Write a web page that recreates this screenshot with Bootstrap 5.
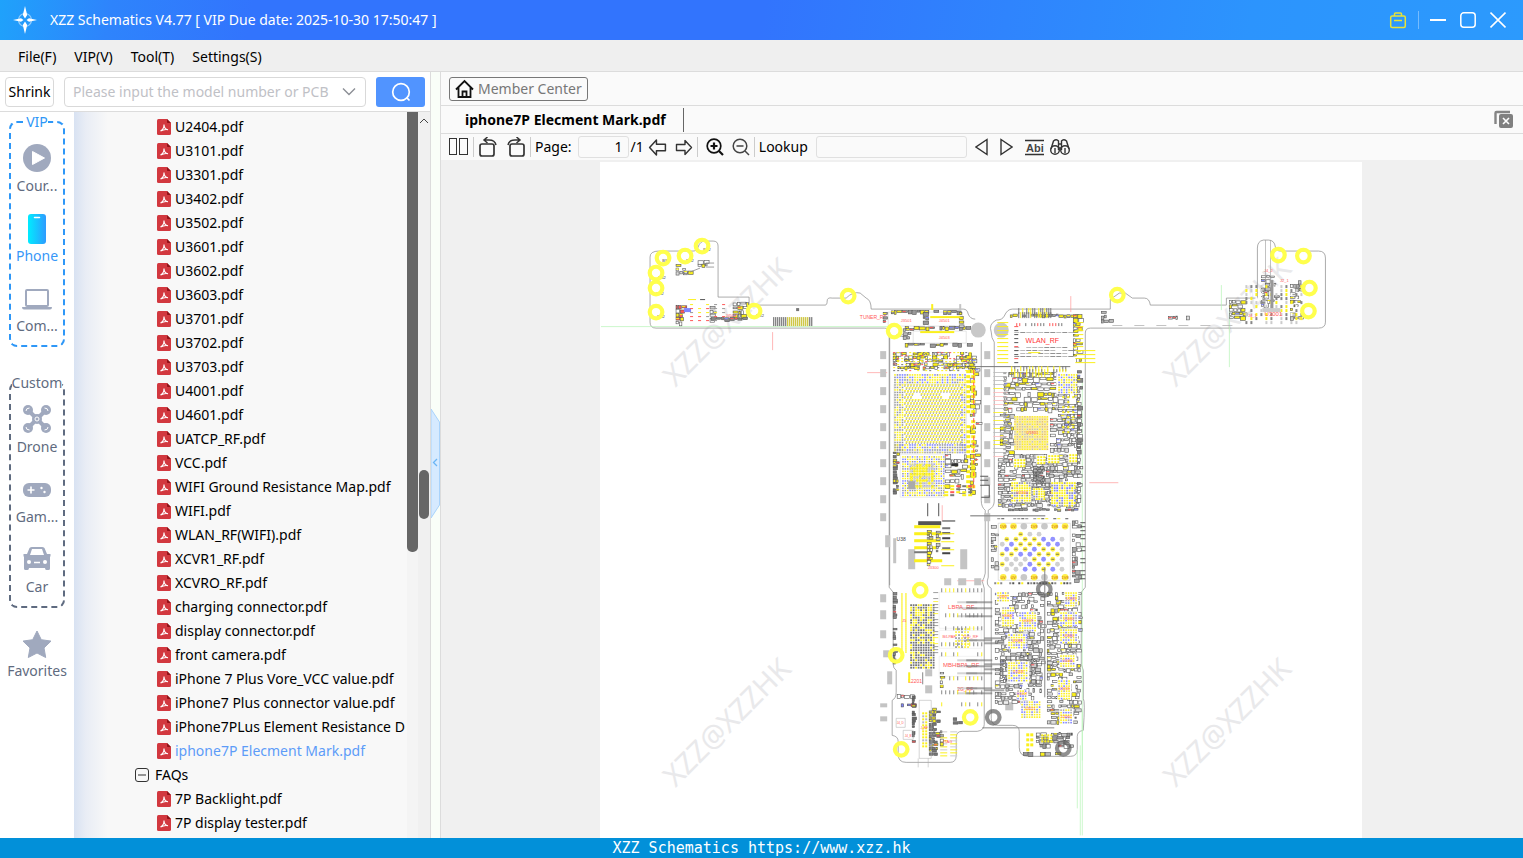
<!DOCTYPE html>
<html lang="en">
<head>
<meta charset="utf-8">
<meta name="viewport" content="width=device-width, initial-scale=1">
<title>XZZ Schematics</title>
<link href="https://cdn.jsdelivr.net/npm/bootstrap@5.3.0/dist/css/bootstrap.min.css" rel="stylesheet">
<style>
:root{--ui:"Noto Sans","Open Sans",sans-serif;--line:#dcdcdc;--slate:#5f6b80}
body{font-family:var(--ui);font-size:14px;line-height:24px;color:#000;background:#fafafa}
svg{flex:none;display:block}
.app-title{height:40px;color:#fff;background:linear-gradient(100deg,#1fa2fb 0,#2e84fc 110px,#3274fd 250px,#3274fd 50%,#2c94fd 82%,#2c9afd 100%);padding:0 17px 0 8px}
.app-title button,.tool{border:0;background:none;padding:0;color:inherit}
.win-tools{gap:14px}
.win-tools .vr{opacity:.35;margin:0 -3px}
.app-menu{height:32px;background:#efefef;border-bottom:1px solid var(--line);padding:2px 18px 0;gap:18px}
.app-menu a,.tree a,.rail-item{color:inherit;text-decoration:none}
.side{width:431px;border-right:1px solid var(--line)}
.search-row{height:40px;background:#fff;border-bottom:1px solid var(--line);padding:0 5px;gap:10px}
.box{border:1px solid #d9d9d9;border-radius:4px;background:#fff;height:30px}
.box input{border:0;outline:0;min-width:0;background:none;padding:0}
.box input::placeholder{color:#bfc1c6;opacity:1}
.go{width:49px;height:30px;border:0;border-radius:3px;background:#5194ff;color:#fff}
.rail{width:74px;background:#fff;color:var(--slate);padding:0 9px}
.rail fieldset{border:2px dashed #2e97f7;border-radius:8px;margin:0 0 26px;padding:5px 0 0}
.rail legend{float:none;width:auto;margin:0 auto -12px;padding:0;background:#fff;font-size:14px;line-height:20px;color:#2e97f7}
.rail .custom{border-color:var(--slate);margin-bottom:16px}
.rail .custom legend{color:var(--slate)}
.rail-item{display:flex;flex-direction:column;align-items:center;height:70px;white-space:nowrap;width:100%;line-height:20px;padding-top:3px}
.rail legend+.rail-item{margin-top:12px}
.rail fieldset .rail-item:last-child{height:68px}
.rail-item svg{color:#a0a9be}
.tree{background:linear-gradient(90deg,#d8e2f2 0,#e9edf5 12px,#f8f8f8 34px);padding-top:3px;min-width:0}
.tree a{display:flex;align-items:center;gap:4px;height:24px;padding-left:83px;white-space:nowrap}
.tree a.folder{padding-left:61px;gap:6px}
.tree a.current{color:#5d9cf8}
.tree-bar{width:11px;background:#f4f4f4}
.tree-bar i{display:block;height:440px;background:#666;border-radius:0 0 5px 5px}
.page-bar{width:12px;background:#f0f0f0}
.page-bar i{display:block;height:49px;width:10px;margin:344px auto 0;background:#666;border-radius:5px}
.splitter{width:10px;background:#f9fef8;border-right:1px solid var(--line);padding-top:18px}
.view{background:#f0f0f0;min-width:0}
.center-row{height:34px;background:#fafafa;border-bottom:1px solid var(--line);padding:0 8px}
.member{height:24px;border:1px solid #777;border-radius:3px;background:#fafafa;color:#777;padding:0 5px;line-height:20px;gap:4px}
.tab-row{height:28px;background:#fafafa;border-bottom:1px solid var(--line)}
.doc-tab{border:0;background:none;font-weight:700;padding:0 17px 0 24px;border-right:1px solid #666}
.tool-row{height:28px;background:#fafafa;border-bottom:2px solid #f0f0f0;padding-left:7px}
.tool-row input{height:22px;border:1px solid #e0e0e0;border-radius:3px;background:#fafafa;padding:0 5px;text-align:right}
.tool-row hr{width:1px;height:20px;margin:0 4px;border:0;background:#ccc;opacity:1}
.s4{margin-left:4px!important}.s6{margin-left:6px!important}.s8{margin-left:8px!important}.s12{margin-left:12px!important}
.sheet{width:70.6%;background:#fff}
.app-foot{height:20px;background:#0290d9;color:#fff;font:15px/20px "DejaVu Sans Mono",monospace}
</style>
</head>
<body class="vh-100 d-flex flex-column overflow-hidden">
<svg width="0" height="0" class="position-absolute" aria-hidden="true">
 <symbol id="pdf" viewBox="0 0 14 16"><path d="M1.500 0H10l4 4v10.500q0 1.500-1.500 1.500h-11Q0 16 0 14.500v-13Q0 0 1.500 0z" fill="#d2383f"/><path d="M10 0v3.200q0 .8.800.800H14z" fill="#901218"/><path d="M3.500 12c2-1 3.500-3.500 3.500-6.500 0 3 1.500 4.800 4 5.200-2.500-.700-5 0-7.500 1.300" fill="none" stroke="#fff" stroke-width="1.100"/></symbol>
 <symbol id="arrow" viewBox="0 0 18 16"><path d="M1.500 8 8 1v4h8.500v6H8v4z" fill="none" stroke="#333" stroke-width="1.400" stroke-linejoin="round"/></symbol>
 <symbol id="rot" viewBox="0 0 20 20"><rect x="2" y="7" width="14" height="12" rx="2" fill="none" stroke="#333" stroke-width="1.700"/><path d="M6 3h5q6 0 7 5M9.500 0 6 3l3.500 3" fill="none" stroke="#333" stroke-width="1.500"/></symbol>
</svg>

<header class="app-title d-flex align-items-center flex-shrink-0">
 <svg width="34" height="34" viewBox="0 0 34 34" fill="#fff"><circle cx="17" cy="17" r="6.500" fill="none" stroke="#fff" stroke-width="1.200" opacity=".5"/><path d="M17 3l2.200 9-2.200 3.500-2.200-3.500zM17 31l2.200-9-2.200-3.500-2.200 3.500zM5 17l8-1.800 2.500 1.800-2.500 1.800zM29 17l-8-1.800-2.500 1.800 2.500 1.800z"/></svg>
 <span class="ms-2">XZZ Schematics V4.77 [ VIP Due date: 2025-10-30 17:50:47 ]</span>
 <div class="win-tools ms-auto d-flex align-items-center">
  <button aria-label="Toolbox"><svg width="18" height="18" viewBox="0 0 18 18" fill="none" stroke="#e8e337" stroke-width="1.500"><rect x="1.700" y="5" width="14.600" height="11.500" rx="1.500"/><path d="M5.500 5V3q0-1 1-1h5q1 0 1 1v2M5 9.500h8"/></svg></button>
  <div class="vr"></div>
  <button aria-label="Minimize"><svg width="16" height="18" viewBox="0 0 16 18"><path d="M0 9h16" stroke="#fff" stroke-width="2"/></svg></button>
  <button aria-label="Maximize"><svg width="16" height="18" viewBox="0 0 16 18"><rect x=".8" y="1.800" width="14.400" height="14.400" rx="3" fill="none" stroke="#fff" stroke-width="1.500"/></svg></button>
  <button aria-label="Close"><svg width="16" height="18" viewBox="0 0 16 18"><path d="M.5 1.500l15 15m0-15l-15 15" stroke="#fff" stroke-width="1.600"/></svg></button>
 </div>
</header>

<nav class="app-menu d-flex align-items-center flex-shrink-0">
 <a href="#">File(F)</a><a href="#">VIP(V)</a><a href="#">Tool(T)</a><a href="#">Settings(S)</a>
</nav>

<div class="d-flex flex-grow-1" style="min-height:0">
 <aside class="side d-flex flex-column flex-shrink-0">
  <form class="search-row d-flex align-items-center flex-shrink-0">
   <button type="button" class="box px-0 flex-shrink-0" style="width:49px">Shrink</button>
   <div class="box d-flex align-items-center flex-grow-1 px-2" style="min-width:0">
    <input class="flex-grow-1" aria-label="Model number or PCB" placeholder="Please input the model number or PCB">
    <svg width="16" height="10" viewBox="0 0 16 10"><path d="M2 1.500l6 6 6-6" fill="none" stroke="#8c8f96" stroke-width="1.400"/></svg>
   </div>
   <button type="button" class="go flex-shrink-0 d-flex align-items-center justify-content-center" aria-label="Search"><svg width="20" height="20" viewBox="0 0 20 20" fill="none" stroke="#fff" stroke-width="1.700"><circle cx="10" cy="10" r="8.300"/><path d="M15.500 15.500l3 3"/></svg></button>
  </form>
  <div class="d-flex flex-grow-1" style="min-height:0">
   <nav class="rail flex-shrink-0">
    <fieldset><legend>VIP</legend>
     <a href="#" class="rail-item"><svg width="28" height="36" viewBox="0 0 28 36"><circle cx="14" cy="18" r="14" fill="currentColor"/><path d="M9.500 11.500v13L21.500 18z" fill="#fff" stroke="#fff" stroke-linejoin="round"/></svg>Cour...</a>
     <a href="#" class="rail-item" style="color:#3797f8"><svg width="28" height="36" viewBox="0 0 28 36"><defs><linearGradient id="pg"><stop stop-color="#00ecff"/><stop offset="1" stop-color="#2e9bff"/></linearGradient></defs><rect x="5" y="4" width="18" height="30" rx="3" fill="url(#pg)"/><path d="M11.500 7.500h5" stroke="#fff" stroke-width="1.500" stroke-linecap="round"/></svg>Phone</a>
     <a href="#" class="rail-item"><svg width="30" height="36" viewBox="0 0 30 36"><rect x="4" y="10" width="22" height="16" rx="1" fill="none" stroke="currentColor" stroke-width="2"/><path d="M0 27h30q0 2.500-2 2.500H2Q0 29.500 0 27z" fill="currentColor"/></svg>Com...</a>
    </fieldset>
    <fieldset class="custom"><legend>Custom</legend>
     <a href="#" class="rail-item"><svg width="28" height="36" viewBox="0 0 28 36"><g fill="none" stroke="currentColor" stroke-width="4"><path d="M6 10l16 16m0-16L6 26"/></g><g fill="currentColor"><circle cx="5" cy="9" r="5"/><circle cx="23" cy="9" r="5"/><circle cx="5" cy="27" r="5"/><circle cx="23" cy="27" r="5"/><circle cx="14" cy="18" r="5"/></g><g fill="none" stroke="#fff" stroke-width="1"><path d="M3 10q0-3 3.500-3M25 10q0-3-3.500-3M3 26q0 3 3.500 3M25 26q0 3-3.500 3"/><circle cx="14" cy="18" r="2"/></g></svg>Drone</a>
     <a href="#" class="rail-item"><svg width="28" height="36" viewBox="0 0 28 36"><rect y="12" width="28" height="14" rx="6" fill="currentColor"/><path d="M4.500 19h7M8 15.500v7" stroke="#fff" stroke-width="1.600"/><circle cx="18.500" cy="17" r="1.200" fill="#fff"/><circle cx="21.500" cy="21" r="1.200" fill="#fff"/></svg>Gam...</a>
     <a href="#" class="rail-item"><svg width="28" height="36" viewBox="0 0 28 36"><path d="M6.500 7Q7.500 6 9 6h10q1.500 0 2.500 1l2.500 6h3.500v2.500H27v12q0 1.500-1.500 1.500h-2q-1.500 0-1.500-2H6q0 2-1.500 2h-2Q1 29 1 27.500v-12H.5V13H4zM9 8l-2 6h14l-2-6z" fill="currentColor" fill-rule="evenodd"/><circle cx="6" cy="21" r="2" fill="#fff"/><circle cx="22" cy="21" r="2" fill="#fff"/><path d="M11 21.500h6" stroke="#fff" stroke-width="1.500"/></svg>Car</a>
    </fieldset>
    <a href="#" class="rail-item"><svg width="30" height="34" viewBox="0 0 30 34"><path d="M15 4l4.300 8.700 9.700 1.400-7 6.800 1.700 9.600L15 26l-8.700 4.500L8 20.900l-7-6.800 9.700-1.400z" fill="currentColor" stroke="currentColor" stroke-linejoin="round"/></svg>Favorites</a>
   </nav>
   <div class="tree flex-grow-1 overflow-hidden" id="tree"></div>
   <div class="tree-bar flex-shrink-0"><i></i></div>
   <div class="page-bar flex-shrink-0"><svg class="mx-auto mt-1" width="10" height="10" viewBox="0 0 10 10"><path d="M1 7l4-4 4 4" fill="none" stroke="#444"/></svg><i></i></div>
  </div>
 </aside>
 <div class="splitter flex-shrink-0 d-flex align-items-center"><button class="tool" aria-label="Collapse"><svg width="9" height="110" viewBox="0 0 9 110"><path d="M0 0l8.500 13v83L0 109z" fill="#d6eaff" stroke="#a9d3fb"/><path d="M6 50l-3.500 3.500L6 57" fill="none" stroke="#6bb5f5" stroke-width="1.300"/></svg></button></div>

 <main class="view flex-grow-1 d-flex flex-column">
  <div class="center-row d-flex align-items-center flex-shrink-0"><button class="member d-flex align-items-center"><svg width="19" height="20" viewBox="0 0 19 20" fill="none" stroke="#111" stroke-width="1.800"><path d="M1 10.500L9.500 2 18 10.500M3.500 8.500V18h12V8.500M7.500 18v-5.500h4V18"/></svg>Member Center</button></div>
  <div class="tab-row d-flex align-items-center flex-shrink-0"><button class="doc-tab">iphone7P Elecment Mark.pdf</button>
   <button class="tool ms-auto me-2" aria-label="Close all"><svg width="22" height="20" viewBox="0 0 22 20"><path d="M2.500 14V3q0-1 1-1H17" fill="none" stroke="#858585" stroke-width="2.400"/><rect x="6" y="4" width="14" height="14" rx="2" fill="#808080"/><path d="M10 8l6 6m0-6l-6 6" stroke="#fff" stroke-width="1.600"/></svg></button></div>
  <div class="tool-row d-flex align-items-center flex-shrink-0">
   <button class="tool" aria-label="Two pages"><svg width="21" height="18" viewBox="0 0 21 18" fill="none" stroke="#333"><rect x="1.500" y=".5" width="7" height="16"/><rect x="11.500" y=".5" width="8" height="16"/></svg></button><hr>
   <button class="tool" aria-label="Rotate left"><svg width="20" height="20"><use href="#rot"/></svg></button>
   <button class="tool s8" aria-label="Rotate right"><svg width="20" height="20" viewBox="0 0 20 20"><use href="#rot" transform="matrix(-1 0 0 1 20 0)"/></svg></button><hr>
   <label for="pg-no">Page:</label><input id="pg-no" value="1" class="s6" style="width:51px"><span style="padding-left:2px">/1</span>
   <button class="tool s4" aria-label="Previous page"><svg width="19" height="17"><use href="#arrow"/></svg></button>
   <button class="tool s8" aria-label="Next page"><svg width="18" height="17" viewBox="0 0 18 16"><use href="#arrow" transform="matrix(-1 0 0 1 18 0)"/></svg></button><hr>
   <button class="tool s4" aria-label="Zoom in"><svg width="18" height="18" viewBox="0 0 18 18" fill="none" stroke="#111" stroke-width="1.700"><circle cx="8" cy="8" r="6.800"/><path d="M13 13l4 4M4.500 8h7M8 4.500v7" stroke-width="2.200"/></svg></button>
   <button class="tool s8" aria-label="Zoom out"><svg width="18" height="18" viewBox="0 0 18 18" fill="none" stroke="#444" stroke-width="1.500"><circle cx="8" cy="8" r="6.800"/><path d="M13 13l4 4M4.500 8h7"/></svg></button><hr>
   <label for="look">Lookup</label><input id="look" class="s8" style="width:151px">
   <button class="tool s8" aria-label="Find previous"><svg width="13" height="18" viewBox="0 0 13 18" fill="none" stroke="#333" stroke-width="1.400"><path d="M12 1.500v15L1 9z"/></svg></button>
   <button class="tool s12" aria-label="Find next"><svg width="13" height="18" viewBox="0 0 13 18" fill="none" stroke="#333" stroke-width="1.400"><path d="M1 1.500v15L12 9z"/></svg></button>
   <button class="tool s12" aria-label="Match case"><svg width="19" height="18" viewBox="0 0 19 18"><path d="M0 2.500h19M0 16.500h19" stroke="#333" stroke-width="1.300"/><text x="1" y="14" font-size="11" font-weight="700" fill="#444" font-family="Liberation Sans">Abi</text></svg></button>
   <button class="tool s6" aria-label="Search document"><svg width="20" height="17" viewBox="0 0 20 17" fill="none" stroke="#333" stroke-width="1.400"><circle cx="5" cy="11" r="4.300"/><circle cx="15" cy="11" r="4.300"/><path d="M1 10L3.500 2q3-2.500 5 0v9M19 10l-2.500-8q-3-2.500-5 0v9M8.500 5h3M8.500 9h3M5 9v5M15 9v5"/></svg></button>
  </div>
  <div class="flex-grow-1 overflow-hidden d-flex justify-content-center" style="min-height:0;padding-right:2px"><div class="sheet"><svg id="board" class="w-100" viewBox="600 162 762 676"></svg></div></div>
 </main>
</div>
<footer class="app-foot text-center flex-shrink-0">XZZ Schematics https://www.xzz.hk</footer>

<script src="https://cdn.jsdelivr.net/npm/bootstrap@5.3.0/dist/js/bootstrap.bundle.min.js"></script>
<script>
// File tree
const files = ['U2404','U3101','U3301','U3402','U3502','U3601','U3602','U3603','U3701','U3702','U3703','U4001','U4601','UATCP_RF','VCC','WIFI Ground Resistance Map','WIFI','WLAN_RF(WIFI)','XCVR1_RF','XCVRO_RF','charging connector','display connector','front camera','iPhone 7 Plus Vore_VCC value','iPhone7 Plus connector value','iPhone7PLus Element Resistance D','iphone7P Elecment Mark','/FAQs','7P Backlight','7P display tester'];
document.getElementById('tree').innerHTML = files.map(n => n[0] === '/'
  ? `<a href="#" class="folder"><svg width="14" height="14" viewBox="0 0 14 14" fill="none" stroke="#333"><rect x=".5" y=".5" width="13" height="13" rx="2.500"/><path d="M3 7h8"/></svg>${n.slice(1)}</a>`
  : `<a href="#"${n.startsWith('iphone7P') ? ' class="current"' : ''}><svg width="14" height="16"><use href="#pdf"/></svg>${n}${n.endsWith(' D') ? '' : '.pdf'}</a>`).join('');

// Board drawing
let seed = 7; const rnd = () => (seed = seed * 16807 % 2147483647) / 2147483647;
const K = '#555', Y = '#fbf01c', G = '#c4c4c4', R = '#ff5858', B = '#8085ff';
const out = [], add = s => out.push(s), pick = a => a[Math.floor(rnd() * a.length)];
const bar = (x, y, w, h, c) => add(`<rect x="${x}" y="${y}" width="${w}" height="${h}" fill="${c}"/>`);
const path = (d, c = '#888', w = .7) => add(`<path d="${d}" fill="none" stroke="${c}" stroke-width="${w}"/>`);
const ring = (x, y, c = '#ffff4d', r = 6.300) => add(`<circle cx="${x}" cy="${y}" r="${r}" fill="none" stroke="${c}" stroke-width="4.200"/>`);
const dot = (x, y, r, c) => add(`<circle cx="${x}" cy="${y}" r="${r}" fill="${c}"/>`);
const word = (x, y, s, t, c = R) => add(`<text x="${x}" y="${y}" font-size="${s}" fill="${c}" text-anchor="middle" font-family="Liberation Sans">${t}</text>`);
const grid = (x, y, w, h, sx, sy, d, cs) => { for (let j = 0; j < h; j += sy) for (let i = 0; i < w; i += sx) bar(x + i, y + j, d, d, pick(cs)); };
// rows of component outlines with small coloured pads
const parts = (x, y, w, h, fill = [Y, '#fff', '#fff', '#ccc'], s = 4, gap = .12) => {
  for (let j = 0; j < h - 2; j += s) for (let i = 0; i < w - 2;) {
    const a = 1.500 + rnd() * s, b = 1.500 + rnd() * (s - 1.500);
    if (rnd() > gap) { add(`<rect x="${(x + i).toFixed(1)}" y="${(y + j + rnd()).toFixed(1)}" width="${a.toFixed(1)}" height="${b.toFixed(1)}" fill="${pick(fill)}" stroke="#555" stroke-width=".6"/>`); if (rnd() < .15) bar((x + i).toFixed(1), y + j + 1, 3, 1, pick([R, Y, Y, B])); }
    i += a + .8;
  } };
const dashes = (x, y, w, h, sx, sy, cs, len = 3, t = 1) => { for (let j = 0; j < h; j += sy) for (let i = 0; i < w; i += sx) if (rnd() < .85) bar(x + i, y + j, len, t, pick(cs)); };

for (const [x, y] of [[734, 329], [1234, 329], [734, 729], [1234, 729]])
  add(`<text transform="translate(${x} ${y}) rotate(-45)" text-anchor="middle" font-size="29" fill="#e9e9eb" font-family="Noto Sans" font-weight="400">XZZ@XZZHK</text>`);

// outlines of both halves
path('M659 251H693q4 0 5-4 2-6 7-6h8q5 0 5 5v51h31v8h76q2 0 2-4t5-3h14q7-7 14-5l6 5q5 2 5 11h92q4 0 5 5 2 5 7 5M981 342V500q0 7 4 10V573q-1 5-3 8l2 7V724q0 6-7 7h-15q-6 0-6 6v18q0 7-6 7h-44q-8 0-8-8v-13q0-5-6-6V700q4-2 4-8v-22q-3-2-3-6v-72l-4-5V332q0-4-5-4H656q-6 0-6-6v-65q0-6 9-6');
path('M1263 240h5q6 0 7 7 1 4 5 4h38q7 0 7 7v64q0 6-7 6h-228q-5 0-5 5v254l-4 5v72l2 6v28q2 3 0 32-6 1-6 6v13q0 7-7 7h-42q-9 0-9-9v-16q0-6-7-6h-14q-7 0-7-7V588q-6-3-3-11V510q6-3 6-9V342q-3-4-3-10-3-8 5-12 6 0 8-4 3-7 8-7h98v-10q5-3 9-6h6l7 5h12q5 0 6 7h76v-7h31v-50q0-7 6-8z');
path('M889.500 332v253', '#888', .7);
path('M601 326.500H889M1221 285v25M1229 310v57M1082 380V760M1077 750v58M1080 745v90M1082 710v125', '#b6f3b6', .7);
path('M772.500 332v18M867 372.500h20M1070.500 296v16M1089 482.500h29M942 505v16M957 580.500h27', '#ff9a9a', .7);

// upper left wing
parts(676, 305, 8, 20, [Y, '#fff', R]); parts(733, 302, 16, 17); parts(710, 306, 6, 17); parts(711, 317, 38, 6, ['#888']);
for (let i = 0; i < 40; i += 2) bar(773 + i, 317, 1.200, 9, i > 12 && i < 36 ? '#c9c02f' : '#777');
parts(676, 264, 10, 12, [Y, '#ddd', '#fff'], 3.500); parts(684, 270, 14, 6, ['#ddd', Y]); parts(698, 260, 10, 9, [Y, '#fff']); path('M690 272l10-4M706 263h8M706 267h8', '#888', .8);
bar(684, 308, 7, 4, B); dashes(690, 304, 40, 18, 8, 4, [Y, Y, '#999', R]); word(731, 317, 4, 'J4504'); bar(796, 308, 3, 3, '#777'); bar(688, 299, 8, 1, Y); bar(700, 299, 5, 1, K);
for (const [x, y] of [[666, 262], [690, 262], [707, 251], [662, 279], [660, 295], [661, 318], [760, 317], [900, 337]]) word(x, y, 4, 'BS2', '#444');
word(873, 319, 5, 'TUNER_RF');
// upper right wing
parts(1101, 311, 10, 12, ['#bbb']); parts(1168, 316, 10, 6, ['#ddd']); parts(1186, 316, 10, 6, ['#ddd']);
parts(1229, 300, 16, 20, [Y, '#fff']); parts(1261, 275, 15, 32, ['#bbb', '#fff'], 4, .3); parts(1290, 280, 12, 40, [Y, '#fff', '#ccc'], 4, .3);
dashes(1245, 285, 60, 38, 5, 4, [Y, '#888', '#ccc', '#fff'], 2, 3); bar(1270, 280, 3, 30, '#999'); bar(1262, 308, 18, 4, '#ccc'); word(1273, 316, 6, 'U3001'); word(1252, 317, 4, 'J4_1'); word(1284, 282, 4, 'J2_1'); word(1268, 272, 4, 'J4_2');
for (const x of [1265, 1270]) bar(x, 240, .6, 40, '#999'); dashes(1112, 325, 120, 1, 22, 9, ['#aaa'], 10, .7);

// left half, top connectors
path('M888 312h36v14h-36zM928 312h34v14h-34zM913 331h53v12h-53z', '#ccc', .5);
parts(887, 310, 76, 4, ['#999', '#999', Y]); parts(905, 326, 65, 5, [Y, '#999']); parts(905, 343, 66, 4, ['#999', Y]); parts(959, 312, 6, 16); parts(923, 312, 5, 14, ['#999']); parts(883, 312, 5, 14, ['#999']);
word(906, 322, 4, 'J3501'); word(944, 322, 4, 'J4501'); word(944, 339, 4, 'J4503'); bar(920, 331, 34, 2, Y); bar(930, 316, 30, 2, Y);
bar(931, 304, 2, 6, Y); bar(959, 304, 2, 6, G); parts(903, 328, 10, 12, ['#bbb']);
parts(893, 352, 84, 18, [Y, Y, '#fff'], 3.500, .3); dashes(893, 352, 84, 20, 4, 3, [Y, '#777', Y, R], 2, 1);
// processor
grid(894, 374, 72, 9, 2.500, 2.500, 1.600, [Y, '#999', B, Y]);
for (let j = 0; j < 60; j += 3) for (let i = (j % 2) * 1.500; i < 56; i += 3) { if ((j > 6 && j < 14 && (i > 8 && i < 16 || i > 36 && i < 44))) continue; bar(904 + i, 384 + j, 1.900, 1.500, Y); bar(904 + i, 385.500 + j, 1.300, 1, '#8c8ca4'); }
grid(894, 384, 8, 67, 2.500, 2.500, 1.600, [Y, '#999']); grid(961, 384, 5, 67, 2.500, 2.500, 1.600, [Y, '#999', B]); grid(894, 444, 72, 8, 2.500, 2.500, 1.600, [Y, '#999', B, '#999']);
parts(970, 368, 8, 125, [Y, '#fff', Y], 4.500, .3); dashes(966, 370, 8, 120, 5, 5, [Y, Y], 4, 3); dashes(973, 370, 5, 120, 5, 6, [R], 1, 4); path('M894 384H966V452H894z', '#ccc', .5);
// memory
grid(902, 456, 42, 40, 2.400, 2.400, 1.500, [Y, Y, '#999', B]); grid(910, 464, 24, 24, 3, 3, 2.400, [Y, Y, '#ccc']); path('M900 454H944V497H900zM909 463h26v26h-26z', '#ddd', .6); parts(893, 452, 6, 44, ['#777', '#777', Y], 3); parts(945, 454, 22, 40, ['#fff', '#fff', Y], 5, .35);
bar(908, 481, 7, 8, '#aaa'); dashes(944, 485, 30, 10, 6, 3, [Y, Y, R, '#777'], 4, 2); bar(951, 463, 7, 3, '#333');
for (const x of [880, 984]) for (let i = 0; i < 10; i++) bar(x, 351 + i * 18, 6, 8, G);
for (const [x, y, w, h] of [[880, 594, 6, 8], [880, 610, 6, 9], [880, 630, 6, 8], [883, 650, 6, 7], [887, 671, 5, 13], [880, 703, 7, 4], [880, 716, 7, 5], [908, 549, 7, 20], [960, 549, 7, 20], [885, 535, 5, 12], [893, 538, 3, 25], [944, 578, 7, 7], [958, 578, 8, 7], [974, 578, 7, 7], [925, 669, 7, 7], [925, 685, 7, 8], [1005, 702, 8, 8]]) bar(x, y, w, h, G);
path('M980 476h8M980 480h8M980 485h9v12h-8', '#555', 1);
dot(978, 330, 7.500, '#c8c8c8'); dot(1001, 330, 7.500, '#c8c8c8');

// middle
bar(927, 503, 1, 13, '#555'); bar(938, 503, 1, 13, '#555'); bar(918, 521, 23, 4, '#555'); bar(942, 520, 13, 1.500, '#777');
for (const [y, w] of [[525, 18], [532, 20], [539, 18], [546, 14], [559, 20]]) bar(914, y, w + 8, 3, Y); bar(914, 551, 18, 2, '#777');
parts(927, 530, 5, 38, [Y, '#fff'], 3); parts(936, 528, 4, 28, ['#ccc'], 3); dashes(942, 527, 8, 30, 12, 5, ['#444', '#777', '#444'], 8, 2); dashes(941, 533, 14, 40, 16, 8, [Y], 13, 1); word(933, 569, 4, 'J3300'); word(901, 541, 5, 'U38', '#444');
bar(970, 515, 75, 1.200, '#888'); bar(975, 366, 95, 1, '#777');

// left half, bottom
parts(893, 592, 4, 74, ['#888'], 3); grid(901, 593, 8, 60, 4, 2, 1.500, [Y]); grid(910, 604, 23, 63, 2.500, 2.500, 1.800, ['#777', '#777', Y]);
path('M939 592h42v36h-42zM939 630h42v18h-42zM939 656h42v20h-42z', '#e4e4e4', .5);
word(961, 609, 6, 'LBPA_RF'); word(949, 638, 4, 'B/LPAF'); word(970, 638, 4, 'TDD_RF'); word(961, 667, 6, 'MBHBPA_RF'); word(965, 691, 5, '2G_RF'); word(915, 683, 5, 'L2201'); word(904, 622, 4, 'J5');
for (const y of [588, 613, 626, 642, 652, 676, 690, 702]) dashes(941, y, 43, 3, 4, 5, [Y, '#888', '#888'], 1, 4);
for (const y of [601, 607, 615, 639, 659, 665, 672, 687, 692]) { bar(957, y, 20, 2, 'rgba(150,150,150,.4)'); bar(966, y, 26, 2, 'rgba(110,110,110,.6)'); }
dashes(933, 592, 6, 62, 9, 3, ['#888', Y], 5, .8); grid(955, 628, 14, 20, 3, 3, 1.600, [Y, '#888', Y]); parts(940, 672, 8, 18, ['#fff', Y], 4, .4); bar(908, 672, 2, 10, Y); bar(922, 672, 1, 12, '#888');
parts(897, 694, 16, 4, ['#fff']); parts(901, 703, 12, 4, [R, B]); parts(912, 695, 4, 50, ['#666'], 3); parts(929, 707, 10, 50, ['#777', Y, '#777'], 3); grid(922, 712, 6, 36, 3, 3, 2, [Y, Y, '#bbb']); dashes(940, 728, 20, 30, 10, 3, [Y, '#ccc', Y], 7, 1); parts(940, 730, 4, 18); parts(953, 717, 10, 9, ['#777'], 4, .4); word(900, 724, 3, 'J4_D'); word(908, 737, 3, 'J4_B'); word(924, 729, 3, 'J_RF'); word(947, 743, 4, 'JTAG'); path('M919 700v58h12V700zM896 718h9v9h-9zM903 730h10v9h-10zM918 758v9M928 758v9', '#aaa', .5);

// right half, top
parts(1010, 314, 70, 4, [Y, '#aaa', Y], 3); dashes(1018, 308, 36, 8, 2, 4, [Y, '#777'], 1, 6); parts(1073, 314, 9, 47, [Y, '#fff'], 4, .3);
for (const y of [332, 347, 350, 353, 356]) dashes(1014, y, 55, 1, 6, 3, ['#777', '#aaa'], 5, .8);
dashes(1016, 323, 50, 1, 3, 3, ['#777', R], 1, 3); word(1042, 343, 7, 'WLAN_RF', '#f33'); bar(1028, 352, 12, 1, Y);
for (let y = 322; y < 364; y += 4) { bar(997, y, 11, 1, Y); bar(1075, y, y > 348 ? 20 : 8, 1, Y); dashes(1014, y, 5, 1, 6, 3, ['#555', R], 4, 1); }
// power area
parts(1004, 372, 54, 42, ['#fff', '#fff', Y, '#fff'], 5, .1); dashes(1008, 366, 60, 7, 3, 3, [Y, '#777', Y], 1, 5); parts(1058, 394, 22, 42, ['#fff', '#eee'], 5, .05); parts(1000, 414, 13, 40, [Y, '#fff', '#ccc'], 4, .2); parts(1050, 418, 30, 36, ['#fff', '#eee', '#ddd'], 5); dashes(1062, 396, 18, 38, 5, 5, [Y], 2, 2);
bar(1056, 372, 22, 22, '#fff'); grid(1058, 374, 19, 19, 2.500, 2.500, 1.600, [Y, Y, B, '#999']); bar(1014, 416, 34, 34, '#fbeea8'); grid(1014, 416, 34, 34, 2.500, 2.500, 1.300, [Y, '#e0b870', '#bbb', Y]); word(1032, 434, 4, 'U1801');
for (let y = 372; y < 458; y += 4) { bar(993, y, 14, .8, pick([Y, '#bbb', '#fbb'])); bar(1003, y, 3, 2, '#aaa'); }
parts(998, 454, 82, 30, ['#fff', '#eee', '#ccc', '#fff'], 4); parts(1033, 466, 12, 20, ['#bbb'], 3);
for (const [x, y, w] of [[1013, 458, 12], [1036, 455, 9], [1047, 454, 12], [1068, 453, 10]]) { bar(x, y, w, 9, '#fff'); grid(x + 1, y + 1, w - 2, 7, 3, 3, 2, [Y]); }
parts(998, 483, 82, 26, ['#fff', '#eee', '#ccc']); for (const [x, y, w, h] of [[1011, 482, 20, 20], [1033, 488, 11, 12], [1051, 482, 24, 24]]) { bar(x, y, w, h, '#fff'); grid(x, y, w, h, 2.500, 2.500, 1.800, [Y, Y, x > 1050 ? B : Y, '#99a']); } word(1022, 494, 4, 'U2301'); parts(1008, 508, 72, 4, ['#999'], 2.500);
parts(1077, 370, 5, 134, ['#888', '#fff', '#fff']);
// SIM pads
path('M998 523h72v57h-72z', '#ccc', .6); parts(991, 521, 6, 52, ['#ddd'], 4, .3); parts(1072, 520, 9, 62, ['#fff', '#aaa'], 4.500, .3); dashes(1080, 522, 6, 60, 7, 4, ['#555'], 5, 1); dashes(997, 518, 73, 1, 4, 4, ['#555', '#888', Y], 3, 1); dashes(994, 582, 77, 2, 3, 4, ['#555', Y, '#888'], 2, 2);
for (const y of [526, 577]) for (let i = 0; i < 7; i++) { const x = 1003 + i * 10.300; dot(x, y, 3.300, (i === 2 || i === 4) ? '#c8c8c8' : '#fff04a'); if (i !== 2 && i !== 4) word(x, y + 1.500, 4, pick(['0V', '1V8']), '#c60'); }
for (let j = 0; j < 8; j++) for (let i = 0; i < 7; i++) { const x = 1002 + i * 9.200 + (j % 2) * 4.500, y = 534 + j * 5, c = pick(['#fff04a', '#fff04a', '#9292ff', '#d0d0d0']); if (x < 1068 && (j || (i > 1 && i < 5))) { dot(x, y, 2.400, c); if (c === '#fff04a') bar(x - 1.500, y - .5, 3, 1, '#775'); } }
// right half, bottom
parts(995, 592, 48, 112, ['#fff', '#fff', '#eee', '#ccc'], 4, .35); parts(1047, 592, 33, 132, ['#fff', '#ddd', '#fff', Y], 4, .22); parts(1000, 655, 40, 30, ['#fff', '#ccc'], 4, .15);
for (const [x, y, w, h] of [[997, 592, 12, 10], [1002, 607, 11, 18], [1019, 612, 17, 18], [1060, 612, 17, 13], [1060, 629, 17, 13], [1060, 655, 15, 12], [1058, 680, 12, 18], [1060, 709, 12, 15], [1008, 662, 20, 20], [1017, 690, 10, 8], [1008, 634, 18, 14], [1021, 701, 18, 16], [1065, 592, 12, 14]]) { bar(x - 1, y - 1, w + 2, h + 2, '#fff'); grid(x, y, w, h, 2.500, 2.500, 1.600, [Y, Y, Y, '#aaa', B]); word(x + w / 2, y + h / 2 + 1, 3.500, 'U' + x); }
bar(1044, 567, 1, 130, '#888'); for (const y of [637, 642, 663, 668, 689]) bar(984, y, 20, 2, 'rgba(110,110,110,.6)');
parts(1036, 732, 38, 18, ['#ccc', '#fff', '#999']); grid(1041, 734, 11, 8, 3, 3, 2, [Y]); dashes(1026, 733, 8, 20, 4, 5, [Y], 3, 3); parts(1023, 752, 12, 6, ['#999']); parts(1040, 752, 22, 5, ['#bbb', Y]); bar(982, 727, 72, 1, '#888');

// screw holes
for (const [x, y] of [[702, 246], [685, 256], [663, 258], [656, 273], [656, 288], [656, 312], [754, 311], [848, 296], [894, 331], [1117, 295], [1278, 255], [1303, 256], [1309, 288], [1308, 311], [920, 590], [896, 655], [970, 717], [901, 749]]) ring(x, y);
for (const [x, y] of [[1044, 589], [993, 717], [1063, 748]]) ring(x, y, 'rgba(90,90,90,.68)');
document.getElementById('board').innerHTML = out.join('');
</script>
</body>
</html>
